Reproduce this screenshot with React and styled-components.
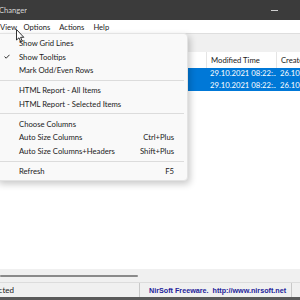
import React from "react";
import styled, { createGlobalStyle } from "styled-components";

const GlobalStyle = createGlobalStyle`
  html, body {
    margin: 0;
    padding: 0;
    background: #ffffff;
  }
  body {
    font-family: Lato, "Open Sans", sans-serif;
  }
`;

const Window = styled.div`
  position: relative;
  width: 300px;
  height: 300px;
  overflow: hidden;
  display: flex;
  flex-direction: column;
  background: #ffffff;
  font-size: 7.7px;
  color: #1b1b1b;
`;

const TitleBar = styled.div`
  height: 20px;
  flex: none;
  display: flex;
  align-items: center;
  background: #3b3b3b;
  color: #d6d6d6;
  font-size: 7.6px;
`;

// the window is wider than the shot, so the start of a text is cut off on the left
const Clipped = styled.div`
  flex: none;
  width: ${(p) => p.$w}px;
  display: flex;
  justify-content: flex-end;
  overflow: hidden;
  white-space: nowrap;
`;

const Spacer = styled.div`
  flex: 1;
`;

const MinButton = styled.div`
  width: 7px;
  height: 1px;
  margin-right: 22px;
  background: #cfcfcf;
`;

const MenuBar = styled.div`
  height: 13px;
  flex: none;
  display: flex;
  align-items: center;
  background: #ffffff;
  font-size: 7.6px;
`;

const MenuItem = styled.div`
  padding: 0 ${(p) => p.$pad || 4.5}px;
  white-space: nowrap;
`;

const Toolbar = styled.div`
  height: 18px;
  flex: none;
  background: #f0f0f0;
  border-top: 1px solid #dedede;
`;

const List = styled.div`
  flex: 1;
  display: flex;
  flex-direction: column;
  background: #ffffff;
`;

const Row = styled.div`
  display: grid;
  grid-template-columns: 96px 110px 70px 1fr;
  height: ${(p) => (p.$head ? 15.5 : 11.5)}px;
  background: ${(p) => (p.$selected ? "#0078d7" : "#ffffff")};
  color: ${(p) => (p.$selected ? "#ffffff" : "#1b1b1b")};
`;

const Cell = styled.div`
  display: flex;
  align-items: center;
  padding-left: 4px;
  overflow: hidden;
  white-space: nowrap;
  border-left: ${(p) => (p.$head ? "1px solid #e5e5e5" : "none")};
`;

const ListBody = styled.div`
  flex: 1;
`;

const HScroll = styled.div`
  height: 13px;
  flex: none;
  display: flex;
  align-items: center;
  background: #f0f0f0;
`;

const Thumb = styled.div`
  width: 138px;
  height: 2px;
  border-radius: 1px;
  background: #8a8a8a;
`;

const StatusBar = styled.div`
  height: 14px;
  flex: none;
  display: flex;
  align-items: center;
  background: #f0f0f0;
  border-top: 1px solid #dcdcdc;
  border-bottom: 3px solid #5a5a5a;
  font-size: 8px;
`;

const StatusPanel = styled.div`
  height: 100%;
  width: ${(p) => p.$w}px;
  display: flex;
  align-items: center;
  border-right: 1px solid #c8c8c8;
  padding-left: ${(p) => p.$pad || 0}px;
  white-space: pre;
  overflow: hidden;
`;

const NirLink = styled.span`
  font-family: "Liberation Sans", Arial, sans-serif;
  font-weight: bold;
  font-size: 7.2px;
  color: #23239a;
`;

const Dropdown = styled.div`
  position: absolute;
  left: -4px;
  top: 33px;
  width: 192px;
  padding: 2px 0;
  background: #f9f9f9;
  border: 1px solid #e3e3e3;
  border-radius: 4px;
  box-shadow: 2px 3px 7px rgba(0, 0, 0, 0.22);
  box-sizing: border-box;
`;

const DropItem = styled.div`
  display: grid;
  grid-template-columns: 22px 1fr auto;
  align-items: center;
  height: 13.75px;
  padding-right: 13px;
  white-space: nowrap;
`;

const Check = styled.div`
  display: flex;
  align-items: center;
  padding-left: 7px;
`;

const Separator = styled.div`
  height: 6px;
  display: flex;
  align-items: center;
  padding: 0 3px;

  &::after {
    content: "";
    flex: 1;
    height: 1px;
    background: #dcdcdc;
  }
`;

const Cursor = styled.svg`
  position: absolute;
  left: 16px;
  top: 29px;
`;

const menuEntries = [
  { label: "Show Grid Lines" },
  { label: "Show Tooltips", checked: true },
  { label: "Mark Odd/Even Rows" },
  "sep",
  { label: "HTML Report - All Items" },
  { label: "HTML Report - Selected Items" },
  "sep",
  { label: "Choose Columns" },
  { label: "Auto Size Columns", key: "Ctrl+Plus" },
  { label: "Auto Size Columns+Headers", key: "Shift+Plus" },
  "sep",
  { label: "Refresh", key: "F5" },
];

const files = [
  { name: "report.docx", path: "C:\\Users\\Docs", modified: "29.10.2021 08:22:...", created: "26.10.2021 08:22:..." },
  { name: "notes.txt", path: "C:\\Users\\Docs", modified: "29.10.2021 08:22:...", created: "26.10.2021 08:22:..." },
];

export default function App() {
  return (
    <>
      <GlobalStyle />
      <Window>
        <TitleBar>
          <Clipped $w={27}>BulkFileChanger</Clipped>
          <Spacer />
          <MinButton />
        </TitleBar>

        <MenuBar>
          <Clipped $w={19}>
            <MenuItem>File</MenuItem>
            <MenuItem>Edit</MenuItem>
            <MenuItem $pad={2}>View</MenuItem>
          </Clipped>
          <MenuItem>Options</MenuItem>
          <MenuItem>Actions</MenuItem>
          <MenuItem>Help</MenuItem>
        </MenuBar>

        <Toolbar />

        <List>
          <Row $head>
            <Cell>Filename</Cell>
            <Cell $head>Path</Cell>
            <Cell $head>Modified Time</Cell>
            <Cell $head>Created Time</Cell>
          </Row>
          {files.map((f) => (
            <Row key={f.name} $selected>
              <Cell>{f.name}</Cell>
              <Cell>{f.path}</Cell>
              <Cell>{f.modified}</Cell>
              <Cell>{f.created}</Cell>
            </Row>
          ))}
          <ListBody />
          <HScroll>
            <Thumb />
          </HScroll>
        </List>

        <StatusBar>
          <StatusPanel $w={139}>
            <Clipped $w={14}>2 Files, 2 Selected</Clipped>
          </StatusPanel>
          <StatusPanel $w={142} $pad={9}>
            <NirLink>NirSoft Freeware.  http://www.nirsoft.net</NirLink>
          </StatusPanel>
        </StatusBar>

        <Dropdown>
          {menuEntries.map((e, i) =>
            e === "sep" ? (
              <Separator key={i} />
            ) : (
              <DropItem key={i}>
                <Check>
                  {e.checked && (
                    <svg width="6" height="5" viewBox="0 0 6 5">
                      <path d="M0.5 2.6 L2.2 4.2 L5.5 0.8" fill="none" stroke="#1b1b1b" strokeWidth="0.9" />
                    </svg>
                  )}
                </Check>
                <span>{e.label}</span>
                <span>{e.key || ""}</span>
              </DropItem>
            )
          )}
        </Dropdown>

        <Cursor width="9" height="14" viewBox="0 0 9 14">
          <path d="M0.5 0.5 L0.5 11 L3 8.8 L4.8 13 L6.3 12.3 L4.6 8.3 L7.8 8.3 Z" fill="#ffffff" stroke="#000000" strokeWidth="0.8" />
        </Cursor>
      </Window>
    </>
  );
}
